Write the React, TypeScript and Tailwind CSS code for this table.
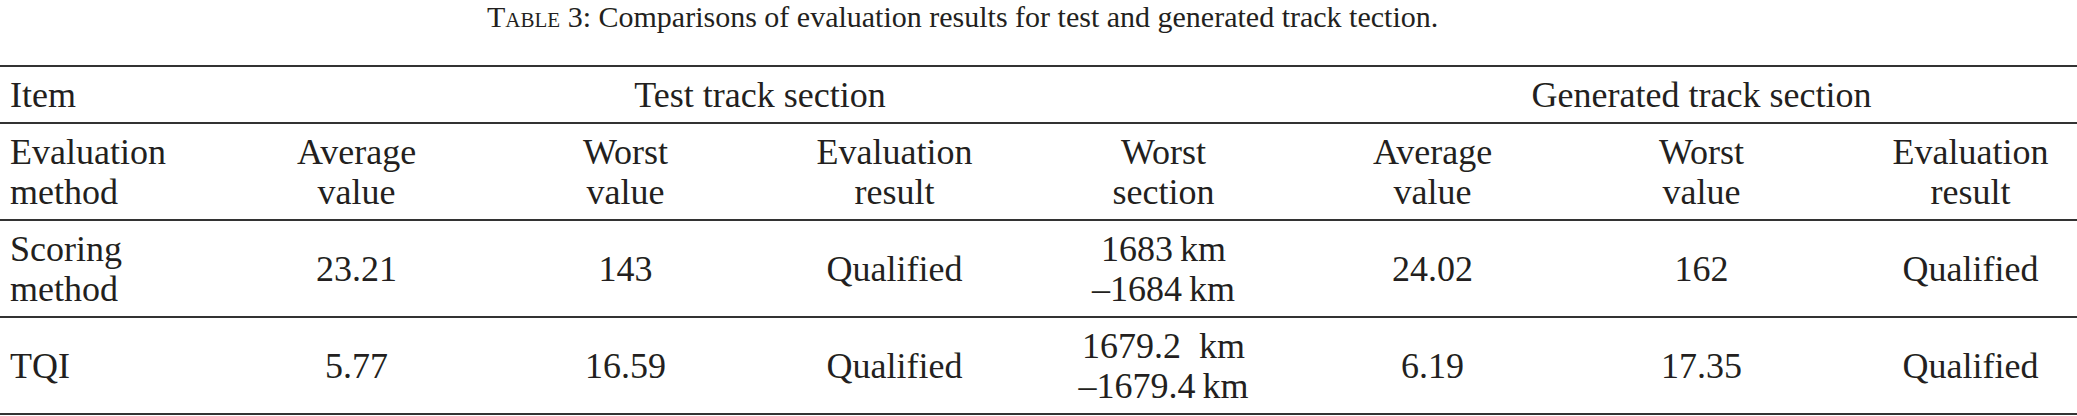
const cols = "grid grid-cols-[222px_repeat(7,269px)]";

const Cell = ({ children, left = false }: { children: React.ReactNode; left?: boolean }) => (
  <div className={left ? "flex items-center pl-[10px]" : "flex items-center justify-center text-center"}>
    <div>{children}</div>
  </div>
);

const rows = [
  {
    item: ["Scoring", "method"],
    values: ["23.21", "143", "Qualified", ["1683\u2009km", "\u20131684\u2009km"], "24.02", "162", "Qualified"],
  },
  {
    item: ["TQI"],
    values: ["5.77", "16.59", "Qualified", ["1679.2\u00a0\u00a0km", "\u20131679.4\u2009km"], "6.19", "17.35", "Qualified"],
  },
];

export default function App() {
  return (
    <div className="w-[2077px] h-[416px] overflow-hidden bg-white text-[#231f20] font-['Liberation_Serif',serif]">
      {/* caption */}
      <div className="pl-[487px] text-[30px] leading-[34px] whitespace-nowrap">
        <span className="[font-variant-caps:small-caps]">Table</span> 3: Comparisons of evaluation results for test and
        generated track tection.
      </div>

      {/* table */}
      <div className="mt-[31px] w-[2105px] border-t-2 border-[#333] text-[36px] leading-[40px]">
        <div className={`${cols} h-[57px] border-b-2 border-[#333]`}>
          <Cell left>Item</Cell>
          <div className="col-span-4 flex items-center justify-center">Test track section</div>
          <div className="col-span-3 flex items-center justify-center">Generated track section</div>
        </div>

        <div className={`${cols} h-[97px] border-b-2 border-[#333]`}>
          <Cell left>
            Evaluation
            <br />
            method
          </Cell>
          {[
            ["Average", "value"],
            ["Worst", "value"],
            ["Evaluation", "result"],
            ["Worst", "section"],
            ["Average", "value"],
            ["Worst", "value"],
            ["Evaluation", "result"],
          ].map((h, i) => (
            <Cell key={i}>
              {h[0]}
              <br />
              {h[1]}
            </Cell>
          ))}
        </div>

        {rows.map((r, i) => (
          <div key={i} className={`${cols} h-[97px] border-b-2 border-[#333]`}>
            <Cell left>
              {r.item.map((t, j) => (
                <div key={j}>{t}</div>
              ))}
            </Cell>
            {r.values.map((v, j) => (
              <Cell key={j}>
                {Array.isArray(v) ? v.map((t, k) => <div key={k}>{t}</div>) : v}
              </Cell>
            ))}
          </div>
        ))}
      </div>
    </div>
  );
}
